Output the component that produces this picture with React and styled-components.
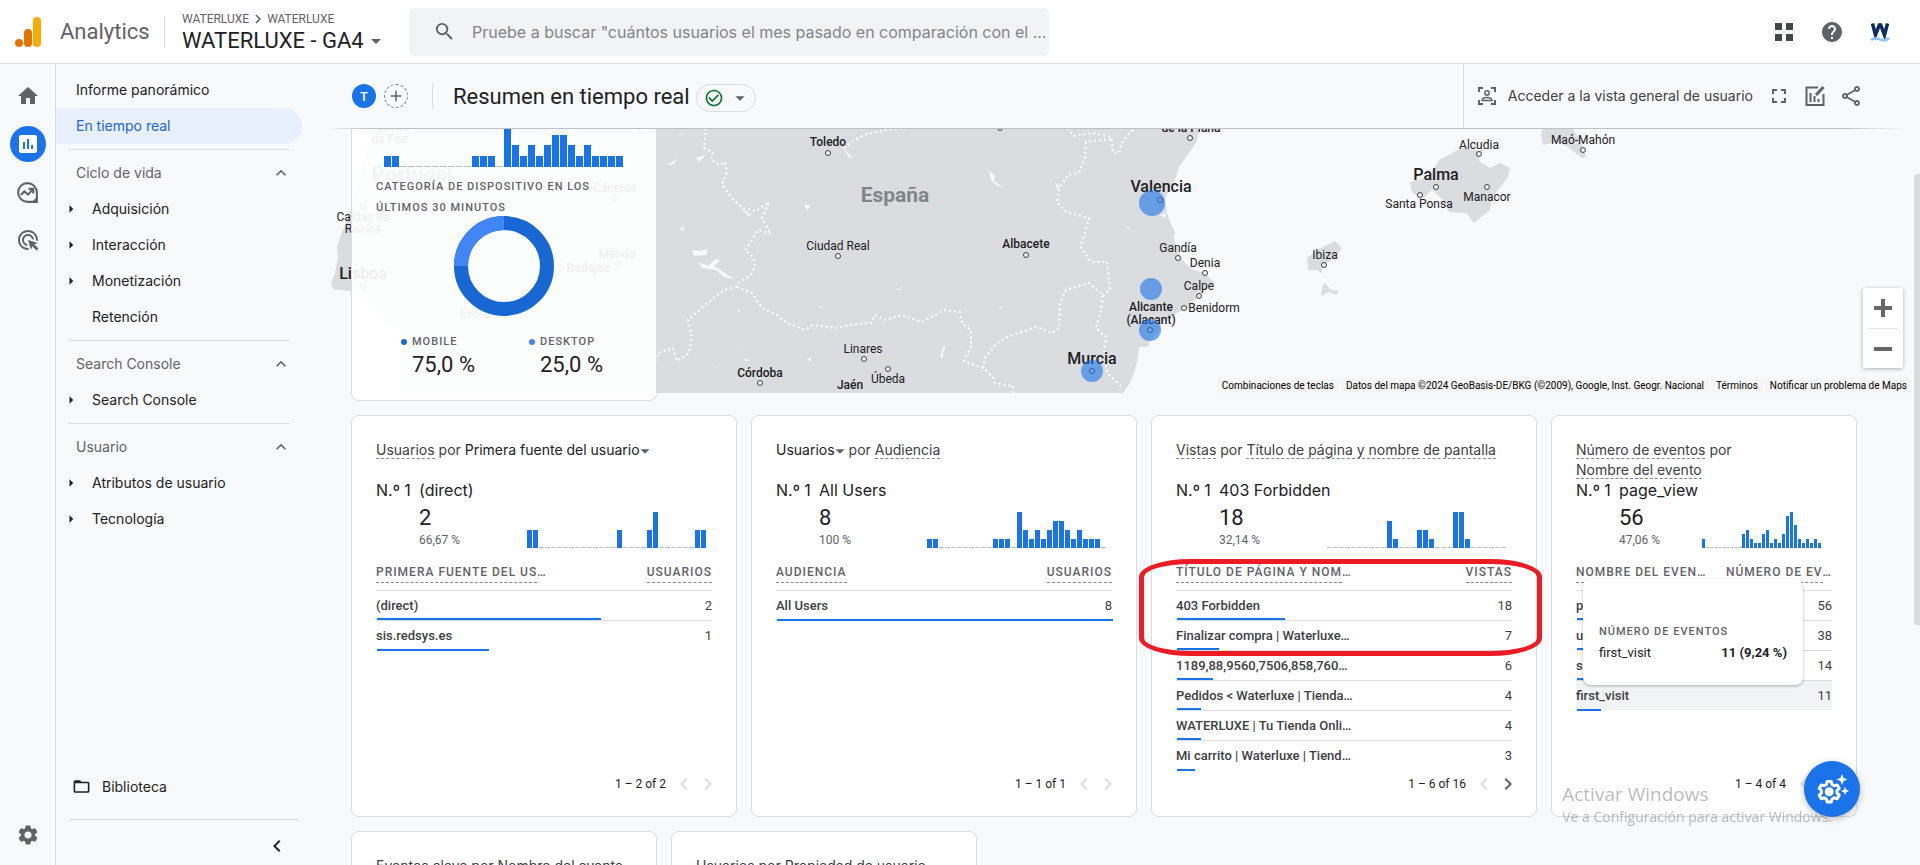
import React from "react";
import styled, { createGlobalStyle } from "styled-components";
import {
  MdAdd,
  MdAdsClick,
  MdArrowDropDown,
  MdArrowRight,
  MdCheckCircleOutline,
  MdChevronLeft,
  MdChevronRight,
  MdExpandLess,
  MdFolderOpen,
  MdFullscreen,
  MdHelp,
  MdHome,
  MdInsertChart,
  MdOutlineShare,
  MdSearch,
  MdSettings,
} from "react-icons/md";

const GlobalStyle = createGlobalStyle`
  * {
    box-sizing: border-box;
  }
  body {
    margin: 0;
    overflow: hidden;
    background: #f8f9fb;
    color: #202124;
    font-family: Roboto, "Liberation Sans", sans-serif;
  }
  button {
    padding: 0;
    border: 0;
    background: none;
    color: inherit;
    font: inherit;
    cursor: pointer;
  }
  a {
    color: inherit;
    text-decoration: none;
  }
  svg {
    display: block;
    flex-shrink: 0;
  }
`;

const displayFont = 'Inter, Roboto, "Liberation Sans", sans-serif';

const Page = styled.div`
  display: flex;
  flex-direction: column;
  height: 100vh;
`;

/* top bar */

const Header = styled.header`
  display: flex;
  align-items: center;
  height: 64px;
  flex-shrink: 0;
  padding: 0 28px 0 14px;
  border-bottom: 1px solid #dadce0;
  background: #fff;
`;

const Product = styled.div`
  display: flex;
  align-items: center;
  gap: 18px;
  width: 150px;
  color: #5f6368;
  font-size: 22px;
`;

const Account = styled.div`
  display: flex;
  flex-direction: column;
  justify-content: center;
  width: 245px;
  height: 32px;
  padding-left: 17px;
  border-left: 1px solid #dadce0;
`;

const Crumbs = styled.div`
  display: flex;
  align-items: center;
  color: #5f6368;
  font-size: 12px;
  line-height: 16px;
`;

const Property = styled.button`
  display: flex;
  align-items: center;
  font-size: 22px;
  line-height: 26px;

  svg {
    color: #5f6368;
  }
`;

const Search = styled.label`
  display: flex;
  align-items: center;
  gap: 16px;
  width: 640px;
  height: 48px;
  padding: 0 4px 0 24px;
  border-radius: 6px;
  background: #f1f3f4;
  color: #5f6368;
`;

const SearchInput = styled.input`
  flex: 1;
  min-width: 0;
  padding: 0;
  border: 0;
  outline: 0;
  background: none;
  font-family: ${displayFont};
  font-size: 16px;
  line-height: 20px;

  &::placeholder {
    color: #80868b;
  }
`;

const HeaderTools = styled.div`
  display: flex;
  gap: 24px;
  margin-left: auto;
  color: #5f6368;
`;

/* navigation */

const Body = styled.div`
  display: flex;
  flex: 1;
  min-height: 0;
`;

const Rail = styled.nav`
  display: flex;
  flex-direction: column;
  align-items: center;
  gap: 12px;
  width: 56px;
  flex-shrink: 0;
  padding: 14px 0 12px;
  border-right: 1px solid #dadce0;
  color: #5f6368;
`;

const RailButton = styled.button`
  display: grid;
  place-items: center;
  width: 36px;
  height: 36px;
  border-radius: 50%;
  background: ${(props) => (props.$active ? "#1a73e8" : "none")};
  color: ${(props) => (props.$active ? "#fff" : "inherit")};

  &:last-child {
    margin-top: auto;
  }
`;

const SideNav = styled.nav`
  display: flex;
  flex-direction: column;
  width: 246px;
  flex-shrink: 0;
  padding-top: 8px;
  font-family: ${displayFont};
  font-size: 14px;
  line-height: 18px;
`;

const NavLink = styled.a`
  display: flex;
  align-items: center;
  height: 36px;
  padding-left: 20px;
  border-radius: 0 18px 18px 0;
  background: ${(props) => (props.$active ? "#e8f0fe" : "none")};
  color: ${(props) => (props.$active ? "#1967d2" : "#202124")};
`;

const NavRule = styled.hr`
  width: 222px;
  height: 1px;
  margin: 5px 12px;
  border: 0;
  background: #dadce0;
`;

const NavHeading = styled.button`
  display: flex;
  align-items: center;
  justify-content: space-between;
  height: 36px;
  padding: 0 11px 0 20px;
  color: #5f6368;
`;

const NavItem = styled.a`
  display: flex;
  align-items: center;
  height: 36px;
  padding-left: 6px;
`;

const ArrowSlot = styled.span`
  width: 30px;
`;

const Library = styled.a`
  display: flex;
  align-items: center;
  gap: 11px;
  margin-top: auto;
  padding: 0 0 23px 16px;
`;

const NavFooter = styled.div`
  display: flex;
  justify-content: flex-end;
  margin: 0 3px 0 13px;
  padding: 14px 10px 7px 0;
  border-top: 1px solid #dadce0;
`;

/* report */

const Main = styled.main`
  position: relative;
  display: flex;
  flex-direction: column;
  flex: 1;
  min-width: 0;
`;

const TitleBar = styled.div`
  display: flex;
  height: 65px;
  flex-shrink: 0;
  margin-left: 24px;
  padding-left: 26px;
  border-bottom: 1px solid;
  border-image: linear-gradient(
      to right,
      transparent,
      #bdc1c6 40px,
      #bdc1c6 calc(100% - 80px),
      transparent calc(100% - 12px)
    )
    1;
`;

const TitleGroup = styled.div`
  display: flex;
  align-items: center;
  flex: 1;
`;

const Avatar = styled.button`
  display: grid;
  place-items: center;
  width: 24px;
  height: 24px;
  margin-right: 8px;
  border: ${(props) => (props.$add ? "1px dashed #80868b" : "0")};
  border-radius: 50%;
  background: ${(props) => (props.$add ? "none" : "#1a73e8")};
  color: ${(props) => (props.$add ? "#5f6368" : "#fff")};
  font-size: 13px;
  font-weight: 500;
`;

const Title = styled.h1`
  margin: 0 6px 0 16px;
  padding: 2px 0 0 20px;
  border-left: 1px solid #dadce0;
  font-size: 22px;
  font-weight: 400;
  line-height: 24px;
`;

const StatusButton = styled.button`
  display: flex;
  align-items: center;
  justify-content: space-between;
  width: 60px;
  height: 28px;
  margin-top: 4px;
  padding: 0 4px 0 7px;
  border: 1px solid #dadce0;
  border-radius: 14px;
  color: #5f6368;
`;

const Actions = styled.div`
  display: flex;
  align-items: center;
  gap: 12px;
  padding: 0 57px 0 11px;
  border-left: 1px solid #dadce0;
  color: #5f6368;
`;

const Overview = styled.button`
  display: flex;
  align-items: center;
  gap: 9px;
  margin-right: 2px;
  color: #3c4043;
  font-family: ${displayFont};
  font-size: 14px;
  line-height: 18px;
`;

const Scroller = styled.div`
  flex: 1;
  min-height: 0;
  overflow: hidden;
`;

const ScrollThumb = styled.div`
  position: absolute;
  top: 110px;
  right: 0;
  width: 6px;
  height: 451px;
  border-radius: 3px 0 0 3px;
  background: #dadce0;
`;

const MapSection = styled.section`
  display: grid;
  margin-left: 28px;
  margin-right: 6px;

  > * {
    grid-area: 1 / 1;
  }
`;

const MapFrame = styled.div`
  position: relative;
  height: 264px;
  overflow: hidden;

  > svg {
    width: 100%;
    height: 100%;
  }
`;

const ZoomControl = styled.div`
  position: absolute;
  right: 11px;
  top: 159px;
  width: 40px;
  padding: 0 5px;
  border-radius: 2px;
  background: #fff;
  box-shadow: 0 1px 4px rgba(0, 0, 0, 0.3);
  color: #666;
`;

const ZoomButton = styled.button`
  display: grid;
  place-items: center;
  width: 30px;
  height: 40px;

  & + & {
    border-top: 1px solid #e6e6e6;
  }
`;

const Attribution = styled.div`
  position: absolute;
  right: 2px;
  bottom: 0;
  display: flex;
  gap: 2px;
  font-size: 10px;
  line-height: 14px;
  color: #000;

  > * {
    padding: 0 5px;
    background: #f5f5f5;
  }
`;

const RealtimeCard = styled.section`
  position: relative;
  width: 306px;
  height: 272px;
  margin-left: 21px;
  padding: 0 24px;
  overflow: hidden;
  border: 1px solid #dadce0;
  border-top: 0;
  border-radius: 0 0 8px 8px;
  background: rgba(255, 255, 255, 0.92);

  > svg {
    margin: 0 auto;
  }
  > svg:first-child {
    margin-left: 8px;
  }
`;

const CardCaption = styled.h2`
  height: 49px;
  margin: 0;
  padding-top: 9px;
  color: #5f6368;
  font-size: 11px;
  font-weight: 500;
  letter-spacing: 1px;
  line-height: 21px;
`;

const Legend = styled.dl`
  display: flex;
  gap: 24px;
  margin: 18px 0 0 24px;
`;

const LegendItem = styled.div`
  width: 104px;
  padding-left: 12px;
`;

const LegendName = styled.dt`
  display: flex;
  align-items: center;
  gap: 5px;
  margin-left: -11px;
  color: #5f6368;
  font-size: 11px;
  font-weight: 500;
  letter-spacing: 1px;
  line-height: 16px;

  &::before {
    content: "";
    width: 6px;
    height: 6px;
    border-radius: 50%;
    background: ${(props) => props.$color};
  }
`;

const LegendValue = styled.dd`
  margin: 0;
  font-size: 22px;
  line-height: 30px;
`;

const Cards = styled.div`
  display: grid;
  grid-template-columns: repeat(19, 1fr);
  gap: 14px;
  margin: 14px 63px 0 49px;
`;

const Card = styled.section`
  position: relative;
  display: flex;
  flex-direction: column;
  grid-column: span ${(props) => props.$span};
  height: 402px;
  padding: 24px;
  border: 1px solid #dadce0;
  border-radius: 8px;
  background: #fff;
`;

const CardTitle = styled.h2`
  height: 40px;
  margin: 0;
  color: #3c4043;
  font-family: ${displayFont};
  font-size: 14px;
  font-weight: 400;
  line-height: 20px;
  white-space: nowrap;
`;

const Hint = styled.span`
  border-bottom: 1px dashed #80868b;
`;

const Picker = styled.button`
  color: #202124;

  svg {
    display: inline-block;
    margin: -2px -6px;
    color: #5f6368;
    vertical-align: middle;
  }
`;

const Top = styled.div`
  display: grid;
  grid-template-columns: 43px 1fr auto;
  height: 68px;
  font-family: ${displayFont};
  font-size: 16px;
  line-height: 20px;
  white-space: nowrap;
`;

const TopName = styled.div`
  grid-column: span 2;
`;

const TopStats = styled.div`
  grid-column: 2;
  padding-top: 4px;
  font-family: Roboto, sans-serif;
`;

const TopValue = styled.div`
  font-size: 22px;
  line-height: 28px;
`;

const TopShare = styled.div`
  color: #5f6368;
  font-size: 12px;
  line-height: 16px;
`;

const ChartSlot = styled.div`
  align-self: end;
  padding-right: ${(props) => (props.$narrow ? 10 : 5)}px;
`;

const Table = styled.table`
  width: 100%;
  margin-top: 14px;
  border-collapse: collapse;
`;

const Th = styled.th`
  height: 28px;
  padding: 0;
  border-bottom: 1px solid #dadce0;
  color: #5f6368;
  font-size: 12px;
  font-weight: 500;
  letter-spacing: 1px;
  line-height: 20px;
  text-align: ${(props) => (props.$end ? "right" : "left")};
  vertical-align: top;
  white-space: nowrap;

  ${Hint} {
    display: inline-block;
    line-height: 20px;
  }
`;

const Row = styled.tr`
  position: relative;
  height: 30px;
  border-bottom: 1px solid #dadce0;
  background: ${(props) => (props.$hover ? "#f1f3f4" : "none")};
  color: #3c4043;
  font-size: 13px;

  &:last-child {
    border-bottom: 0;
  }
`;

const Name = styled.td`
  padding: 0;
  font-weight: 500;
  white-space: nowrap;
`;

const Amount = styled.td`
  padding: 0;
  text-align: right;
`;

const Share = styled.span`
  position: absolute;
  bottom: -1px;
  left: 1px;
  height: 2px;
  background: #1a73e8;
`;

const Pager = styled.div`
  display: flex;
  align-items: center;
  justify-content: flex-end;
  margin: auto -8px -4px 0;
  font-size: 12px;
  line-height: 24px;
`;

const PagerButton = styled.button`
  display: grid;
  place-items: center;
  width: 24px;
  height: 24px;
  color: ${(props) => (props.disabled ? "#dadce0" : "#5f6368")};

  &:first-of-type {
    margin-left: 6px;
  }
`;

/* things that float over the report */

const RedMark = styled.div`
  position: absolute;
  z-index: 2;
  top: 143px;
  left: -13px;
  right: -6px;
  height: 97px;
  border: 5px solid #ed1c24;
  border-radius: 52px / 18px;
  pointer-events: none;
`;

const Tooltip = styled.div`
  position: absolute;
  top: 163px;
  left: 31px;
  width: 220px;
  height: 106px;
  padding: 45px 16px 0;
  border-radius: 8px;
  background: #fff;
  box-shadow: 0 1px 3px rgba(60, 64, 67, 0.4);
`;

const TooltipTitle = styled.div`
  color: #5f6368;
  font-size: 11px;
  font-weight: 500;
  letter-spacing: 1px;
  line-height: 16px;
`;

const TooltipRow = styled.div`
  display: flex;
  justify-content: space-between;
  font-size: 13px;
  line-height: 26px;
`;

const Fab = styled.button`
  position: fixed;
  right: 60px;
  bottom: 48px;
  display: grid;
  place-items: center;
  width: 56px;
  height: 56px;
  border-radius: 50%;
  background: #1a73e8;
  box-shadow: 0 2px 6px rgba(60, 64, 67, 0.35);
`;

const Watermark = styled.div`
  position: fixed;
  right: 88px;
  bottom: 38px;
  color: rgba(120, 120, 120, 0.5);
  font-family: "Open Sans", sans-serif;
  font-size: 14px;
  line-height: 20px;
  pointer-events: none;
`;

const WatermarkTitle = styled.div`
  font-size: 19px;
  line-height: 26px;
`;

const AnalyticsLogo = () => (
  <svg width="28" height="32" viewBox="0 0 28 32">
    <rect x="19" y="1" width="8" height="30" rx="4" fill="#f9ab00" />
    <path d="M10 17a4 4 0 0 1 8 0v10a4 4 0 0 1-8 0z" fill="#e37400" />
    <circle cx="5" cy="27" r="4" fill="#e37400" />
  </svg>
);

const AppsIcon = () => (
  <svg width="24" height="24" viewBox="0 0 24 24" fill="#444746">
    <path d="M3 3h7v7H3zM14 3h7v7h-7zM3 14h7v7H3zM14 14h7v7h-7z" />
  </svg>
);

const BrandIcon = () => (
  <svg width="24" height="24" viewBox="0 0 24 24">
    <path
      d="M4.500 3.500l3 11.500L11.300 5h1.400l3.800 10 3-11.500"
      fill="none"
      stroke="#0b2c5f"
      strokeWidth="3.500"
    />
    <path
      d="M3 20q4-3 9-.5t9-1.500"
      fill="none"
      stroke="#8cc4ff"
      strokeWidth="2.500"
    />
  </svg>
);

const TrendIcon = () => (
  <svg width="25" height="25" viewBox="0 0 24 24" fill="none" stroke="currentColor" strokeWidth="2">
    <path d="M12 3a9 9 0 1 0 0 18h9v-9a9 9 0 0 0-9-9z" />
    <path d="M18 20.500a10 10 0 0 0 2.500-2.500" />
    <path d="M5.500 14.500L9 11l3.500 3 4.500-5" />
    <path d="M13 8.500h4.500V13" />
  </svg>
);

const UserScanIcon = () => (
  <svg width="24" height="24" viewBox="0 0 24 24" fill="none" stroke="#5f6368" strokeWidth="2">
    <path d="M4 8V4h4M16 4h4v4M20 16v4h-4M8 20H4v-4" />
    <circle cx="12" cy="9" r="2.200" strokeWidth="1.500" />
    <path d="M7 16.500c0-4 10-4 10 0z" strokeWidth="1.500" />
  </svg>
);

const EditChartIcon = () => (
  <svg width="24" height="24" viewBox="0 0 24 24" fill="none" stroke="currentColor" strokeWidth="2">
    <path d="M15 3.500H3.500V21H20.500V10" />
    <path d="M7.500 9v9M11.500 12v6M15.500 15v3" />
    <path d="M13 11l7.500-8" strokeWidth="3" />
  </svg>
);

const PlusIcon = () => (
  <svg width="18" height="18" fill="currentColor">
    <path d="M7 0h4v7h7v4h-7v7H7v-7H0V7h7z" />
  </svg>
);

const MinusIcon = () => (
  <svg width="18" height="18" fill="currentColor">
    <path d="M0 7h18v4H0z" />
  </svg>
);

const GearSparkIcon = () => (
  <svg width="36" height="36" viewBox="0 0 36 36" fill="none">
    <path
      d="M13.200 10.500h4l.8 3 2.200 1.300 3-.9 2 3.500-2.200 2.100v2.600l2.200 2.100-2 3.500-3-.9-2.200 1.300-.8 3h-4l-.8-3-2.200-1.300-3 .9-2-3.500 2.200-2.100v-2.600l-2.200-2.100 2-3.500 3 .9 2.200-1.300z"
      stroke="#fff"
      strokeWidth="3"
      strokeLinejoin="round"
    />
    <circle cx="15.200" cy="20.800" r="4.500" fill="#fff" />
    <path
      d="M28 3l1.600 3.900L33.500 8.500l-3.900 1.600L28 14l-1.600-3.900-3.900-1.600 3.900-1.600zM31 16l1.200 2.800L35 20l-2.800 1.200L31 24l-1.200-2.800L27 20l2.800-1.200z"
      fill="#fff"
    />
  </svg>
);

const Sparkbars = ({ values, max, pitch, scale, height }) => (
  <svg width={values.length * pitch} height={height}>
    {values.map((value, i) => {
      const h = value ? Math.round((value / max) * (scale || height)) : 1;
      return (
        <rect
          key={i}
          x={i * pitch}
          y={height - h}
          width={pitch - 1}
          height={h}
          fill={value ? "#1a73e8" : "#bdc1c6"}
        />
      );
    })}
  </svg>
);

const Donut = () => (
  <svg width="100" height="100" viewBox="0 0 100 100" fill="none" strokeWidth="14">
    <circle cx="50" cy="50" r="43" stroke="#1967d2" />
    <path d="M7 50A43 43 0 0 1 50 7" stroke="#4285f4" />
  </svg>
);

const regionBorders = [
  "M706 128L704 148 713 152 711 160 720 165 725 162 727 172 722 184 731 197 742 208 756 211 769 202 762 218 771 234 758 230 752 240 745 250 753 257 755 266 751 275 738 283 737 287",
  "M737 287L724 290 705 305 688 320 692 337 689 353 677 361 673 348 658 353 656 362",
  "M737 287L752 293 762 308 777 315 787 323 805 330 813 325 836 328 856 324 871 323 875 315 885 320 901 315 922 322 944 310 960 312 962 323 971 330 971 347 964 361 983 368 993 377 995 383 1013 386 1013 393",
  "M983 368L985 358 997 343 1007 337 1036 327 1052 333 1059 328 1060 303 1066 290 1089 283 1103 295 1101 310 1096 328 1106 337 1104 353 1107 373 1123 388",
  "M1068 128L1073 136 1093 133 1111 137 1113 152 1119 153 1121 145 1130 132 1136 128",
  "M1111 139L1086 142 1085 157 1079 173 1068 175 1060 187 1057 202 1066 212 1089 218 1081 247 1091 262 1107 262 1110 290 1103 295",
  "M844 148L852 142 864 135 885 130 911 128",
];

const lakes =
  "M666 165l12-6-5 5zM678 136l9-5-5 4zM696 158l10-3-7 7zM692 250l8 1 8-2-2 6-12 1zM698 262l10 4 8-7 4 1-6 6 20 13-10-2-8-7-14-2zM740 208l12 7-3 1zM804 205l7 0-4 5zM680 230l4-5-1 6zM989 170l6 6-1 5 10 7-8-3-5-5zM1055 182l4 4-1 6zM1124 224l8 6-3-1zM1160 215l6-2-1 5zM896 290l7-4-4 4zM735 345l10 14 7 1-6 1zM807 360l4-3 0 4zM940 357l3-10 3-1-3 6 0 6zM844 148l9 11-5-3zM714 365l3 3-1-2zM738 308l2 4-2 0zM818 305l6 3-3 0zM877 357l5-14-1 8zM998 306l6 1-3 1z";

// [name, x, y, size, weight, marker x, marker y]
const places = [
  ["Toledo", 828, 146, 12, 500, 828, 153],
  ["Ciudad Real", 838, 250, 12, 400, 838, 256],
  ["Albacete", 1026, 248, 12, 500, 1026, 255],
  ["de la Plana", 1191, 132, 12, 500, 1190, 138],
  ["Valencia", 1161, 192, 16, 500, 1160, 200],
  ["Gandía", 1178, 252, 12, 400, 1178, 258],
  ["Denia", 1205, 267, 12, 400, 1205, 273],
  ["Calpe", 1199, 290, 12, 400, 1199, 296],
  ["Benidorm", 1214, 312, 12, 400, 1184, 308],
  ["Alicante", 1151, 311, 12, 500],
  ["(Alacant)", 1151, 324, 12, 500, 1150, 330],
  ["Murcia", 1092, 364, 16, 500, 1092, 371],
  ["Linares", 863, 353, 12, 400, 864, 359],
  ["Úbeda", 888, 383, 12, 400, 888, 369],
  ["Córdoba", 760, 377, 12, 500, 760, 383],
  ["Jaén", 850, 389, 12, 500, 1000, 128],
  ["Alcudia", 1479, 149, 12, 400, 1479, 154],
  ["Palma", 1436, 180, 16, 500, 1436, 187],
  ["Santa Ponsa", 1419, 208, 12, 400, 1420, 195],
  ["Manacor", 1487, 201, 12, 400, 1487, 187],
  ["Maó-Mahón", 1583, 144, 12, 400, 1583, 150],
  ["Ibiza", 1325, 259, 12, 400, 1324, 265],
  ["Figueira", 388, 131, 12, 400],
  ["da Foz", 389, 143, 12, 400, 641, 131],
  ["Cáceres", 615, 192, 12, 400, 615, 198],
  ["Caldas da", 363, 221, 12, 400, 363, 207],
  ["Rainha", 363, 233, 12, 400],
  ["Mérida", 617, 258, 12, 400, 618, 264],
  ["Badajoz", 588, 272, 12, 500, 561, 268],
  ["Lisboa", 363, 279, 16, 500, 363, 287],
  ["Évora", 475, 318, 12, 400],
];

const MapDrawing = () => (
  <svg viewBox="330 129 1584 264" preserveAspectRatio="xMinYMin slice">
    <g fill="#dadce0">
      <path d="M1200 128L1196 143 1179 167 1175 180 1170 187 1165 200 1167 213 1170 222 1175 232 1174 238 1178 252 1185 263 1193 270 1205 273 1215 283 1205 290 1197 298 1191 302 1189 308 1179 312 1171 317 1162 322 1160 330 1150 340 1148 347 1139 347 1138 357 1135 370 1130 383 1123 393H400L400 330 372 312 360 290 348 291 333 289 331 283 335 273 338 257 337 247 341 235 352 207 372 128z" />
      <path d="M1462 148L1439 160 1429 177 1410 182 1412 192 1421 200 1432 190 1443 200 1449 212 1466 213 1474 223 1480 218 1490 210 1492 197 1502 185 1508 177 1510 168 1500 163 1490 168 1480 162 1478 155 1486 148 1479 151z" />
      <path d="M1541 135L1543 128 1572 128 1580 140 1586 157 1582 158 1568 147 1557 142 1543 145z" />
      <path d="M1317 250L1335 241 1342 248 1335 258 1329 262 1323 265 1322 273 1317 270 1308 270 1307 258z" />
      <path d="M1325 283L1331 290 1338 291 1337 295 1329 292 1321 296 1322 287z" />
    </g>
    <path d={lakes} fill="#f8f9fb" />
    <g fill="none" stroke="#fff" strokeWidth="2" strokeDasharray="2 3">
      {regionBorders.map((d) => (
        <path key={d} d={d} />
      ))}
    </g>
    <g fill="#202124" textAnchor="middle">
      {places.map(([name, x, y, size, weight]) => (
        <text key={name} x={x} y={y} fontSize={size} fontWeight={weight}>
          {name}
        </text>
      ))}
    </g>
    <g fill="#80868b" fontSize="21" fontWeight="700" textAnchor="middle">
      <text x="895" y="202">España</text>
      <text x="412" y="181">Portugal</text>
    </g>
    <g fill="#f1f3f4" stroke="#3c4043">
      {places
        .filter((place) => place[5])
        .map(([name, , , , , cx, cy]) => (
          <circle key={name} cx={cx} cy={cy} r="2.500" />
        ))}
    </g>
    <g fill="#1a73e8" fillOpacity=".6">
      <circle cx="1152" cy="203" r="13" />
      <circle cx="1151" cy="289" r="11" />
      <circle cx="1150" cy="330" r="11" />
      <circle cx="1092" cy="371" r="11" />
    </g>
  </svg>
);

const zeros = (n) => Array(n).fill(0);

const activity = [1, 1, ...zeros(9), 1, 1, 1, 0, 4, 2, 1, 2, 1, 2, 3, 3, 2, 1, 2, 1, 1, 1];

const cards = [
  {
    id: "source",
    span: 5,
    title: (
      <>
        <Hint>Usuarios</Hint> por{" "}
        <Picker>
          Primera fuente del usuario
          <MdArrowDropDown size={22} />
        </Picker>
      </>
    ),
    name: "(direct)",
    value: "2",
    share: "66,67 %",
    max: 2,
    bars: [1, 1, ...zeros(13), 1, ...zeros(4), 1, 2, ...zeros(6), 1, 1],
    columns: [["PRIMERA FUENTE DEL US", "…"], ["USUARIOS"]],
    total: 3,
    rows: [
      ["(direct)", 2],
      ["sis.redsys.es", 1],
    ],
    range: "1 – 2 of 2",
  },
  {
    id: "audience",
    span: 5,
    title: (
      <>
        <Picker>
          Usuarios
          <MdArrowDropDown size={22} />
        </Picker>{" "}
        por <Hint>Audiencia</Hint>
      </>
    ),
    name: "All Users",
    value: "8",
    share: "100 %",
    max: 4,
    bars: [...activity, 0],
    columns: [["AUDIENCIA"], ["USUARIOS"]],
    total: 8,
    rows: [["All Users", 8]],
    range: "1 – 1 of 1",
  },
  {
    id: "page",
    span: 5,
    title: (
      <>
        <Hint>Vistas</Hint> por <Hint>Título de página y nombre de pantalla</Hint>
      </>
    ),
    name: "403 Forbidden",
    value: "18",
    share: "32,14 %",
    max: 4,
    bars: [...zeros(10), 3, 1, ...zeros(3), 2, 2, 1, ...zeros(3), 4, 4, 1, ...zeros(6)],
    columns: [["TÍTULO DE PÁGINA Y NOM", "…"], ["VISTAS"]],
    total: 56,
    rows: [
      ["403 Forbidden", 18],
      ["Finalizar compra | Waterluxe…", 7],
      ["1189,88,9560,7506,858,760…", 6],
      ["Pedidos < Waterluxe | Tienda…", 4],
      ["WATERLUXE | Tu Tienda Onli…", 4],
      ["Mi carrito | Waterluxe | Tiend…", 3],
    ],
    range: "1 – 6 of 16",
    hasNext: true,
    overlay: <RedMark />,
  },
  {
    id: "event",
    span: 4,
    title: (
      <>
        <Hint>Número de eventos</Hint> por
        <br />
        <Hint>Nombre del evento</Hint>
      </>
    ),
    name: "page_view",
    value: "56",
    share: "47,06 %",
    max: 8,
    bars: [2, ...zeros(9), 3, 4, 2, 1, 1, 3, 4, 1, 2, 1, 3, 7, 8, 5, 2, 1, 2, 1, 2, 1],
    columns: [["NOMBRE DEL EVEN", "…"], ["NÚMERO DE EV", "…"]],
    total: 119,
    rows: [
      ["page_view", 56],
      ["user_engagement", 38],
      ["session_start", 14],
      ["first_visit", 11],
    ],
    hovered: "first_visit",
    range: "1 – 4 of 4",
    overlay: (
      <Tooltip role="tooltip">
        <TooltipTitle>NÚMERO DE EVENTOS</TooltipTitle>
        <TooltipRow>
          <span>first_visit</span>
          <b>11 (9,24 %)</b>
        </TooltipRow>
      </Tooltip>
    ),
  },
];

const ReportCard = ({ card }) => (
  <Card $span={card.span}>
    <CardTitle>{card.title}</CardTitle>
    <Top>
      <div>N.º 1</div>
      <TopName>{card.name}</TopName>
      <TopStats>
        <TopValue>{card.value}</TopValue>
        <TopShare>{card.share}</TopShare>
      </TopStats>
      <ChartSlot $narrow={card.span < 5}>
        <Sparkbars
          values={card.bars}
          max={card.max}
          pitch={card.span < 5 ? 4 : 6}
          height={36}
        />
      </ChartSlot>
    </Top>
    <Table>
      <thead>
        <tr>
          {card.columns.map(([label, more], i) => (
            <Th key={label} scope="col" $end={i === 1}>
              <Hint>{label}</Hint>
              {more}
            </Th>
          ))}
        </tr>
      </thead>
      <tbody>
        {card.rows.map(([name, amount]) => (
          <Row key={name} $hover={name === card.hovered}>
            <Name>
              {name}
              <Share style={{ width: `${(amount / card.total) * 100}%` }} />
            </Name>
            <Amount>{amount}</Amount>
          </Row>
        ))}
      </tbody>
    </Table>
    <Pager>
      {card.range}
      <PagerButton aria-label="Anterior" disabled>
        <MdChevronLeft size={24} />
      </PagerButton>
      <PagerButton aria-label="Siguiente" disabled={!card.hasNext}>
        <MdChevronRight size={24} />
      </PagerButton>
    </Pager>
    {card.overlay}
  </Card>
);

const sections = [
  {
    name: "Ciclo de vida",
    items: ["Adquisición", "Interacción", "Monetización", "Retención"],
  },
  { name: "Search Console", items: ["Search Console"] },
  { name: "Usuario", items: ["Atributos de usuario", "Tecnología"] },
];

const App = () => {
  return (
    <Page>
      <GlobalStyle />
      <Header>
        <Product>
          <AnalyticsLogo />
          Analytics
        </Product>
        <Account>
          <Crumbs>
            WATERLUXE
            <MdChevronRight size={18} />
            WATERLUXE
          </Crumbs>
          <Property>
            WATERLUXE - GA4
            <MdArrowDropDown size={24} />
          </Property>
        </Account>
        <Search>
          <MdSearch size={23} />
          <SearchInput
            type="text"
            aria-label="Buscar"
            placeholder='Pruebe a buscar "cuántos usuarios el mes pasado en comparación con el ...'
          />
        </Search>
        <HeaderTools>
          <button aria-label="Aplicaciones">
            <AppsIcon />
          </button>
          <button aria-label="Ayuda">
            <MdHelp size={24} />
          </button>
          <button aria-label="Cuenta">
            <BrandIcon />
          </button>
        </HeaderTools>
      </Header>
      <Body>
        <Rail>
          <RailButton aria-label="Inicio">
            <MdHome size={24} />
          </RailButton>
          <RailButton aria-label="Informes" $active>
            <MdInsertChart size={24} />
          </RailButton>
          <RailButton aria-label="Explorar">
            <TrendIcon />
          </RailButton>
          <RailButton aria-label="Publicidad">
            <MdAdsClick size={24} />
          </RailButton>
          <RailButton aria-label="Administrar">
            <MdSettings size={24} />
          </RailButton>
        </Rail>
        <SideNav>
          <NavLink href="#">Informe panorámico</NavLink>
          <NavLink href="#" $active>
            En tiempo real
          </NavLink>
          {sections.map((section) => (
            <React.Fragment key={section.name}>
              <NavRule />
              <NavHeading>
                {section.name}
                <MdExpandLess size={20} />
              </NavHeading>
              {section.items.map((item) => (
                <NavItem key={item} href="#">
                  <ArrowSlot>
                    {item !== "Retención" && <MdArrowRight size={18} />}
                  </ArrowSlot>
                  {item}
                </NavItem>
              ))}
            </React.Fragment>
          ))}
          <Library href="#">
            <MdFolderOpen size={19} />
            Biblioteca
          </Library>
          <NavFooter>
            <button aria-label="Contraer">
              <MdChevronLeft size={24} />
            </button>
          </NavFooter>
        </SideNav>
        <Main>
          <TitleBar>
            <TitleGroup>
              <Avatar>T</Avatar>
              <Avatar $add aria-label="Añadir comparación">
                <MdAdd size={18} />
              </Avatar>
              <Title>Resumen en tiempo real</Title>
              <StatusButton aria-label="Estado de los datos">
                <MdCheckCircleOutline size={20} color="#137333" />
                <MdArrowDropDown size={22} />
              </StatusButton>
            </TitleGroup>
            <Actions>
              <Overview>
                <UserScanIcon />
                Acceder a la vista general de usuario
              </Overview>
              <button aria-label="Pantalla completa">
                <MdFullscreen size={24} />
              </button>
              <button aria-label="Personalizar informe">
                <EditChartIcon />
              </button>
              <button aria-label="Compartir">
                <MdOutlineShare size={24} />
              </button>
            </Actions>
          </TitleBar>
          <Scroller>
            <MapSection>
              <MapFrame>
                <MapDrawing />
                <ZoomControl>
                  <ZoomButton aria-label="Ampliar">
                    <PlusIcon />
                  </ZoomButton>
                  <ZoomButton aria-label="Reducir">
                    <MinusIcon />
                  </ZoomButton>
                </ZoomControl>
                <Attribution>
                  <button>Combinaciones de teclas</button>
                  <span>
                    Datos del mapa ©2024 GeoBasis-DE/BKG (©2009), Google, Inst. Geogr. Nacional
                  </span>
                  <a href="#">Términos</a>
                  <a href="#">Notificar un problema de Maps</a>
                </Attribution>
              </MapFrame>
              <RealtimeCard>
                <Sparkbars
                  values={[...activity, 1]}
                  max={4}
                  pitch={8}
                  scale={43}
                  height={38}
                />
                <CardCaption>
                  CATEGORÍA DE DISPOSITIVO EN LOS ÚLTIMOS 30 MINUTOS
                </CardCaption>
                <Donut />
                <Legend>
                  <LegendItem>
                    <LegendName $color="#1967d2">MOBILE</LegendName>
                    <LegendValue>75,0 %</LegendValue>
                  </LegendItem>
                  <LegendItem>
                    <LegendName $color="#4285f4">DESKTOP</LegendName>
                    <LegendValue>25,0 %</LegendValue>
                  </LegendItem>
                </Legend>
              </RealtimeCard>
            </MapSection>
            <Cards>
              {cards.map((card) => (
                <ReportCard key={card.id} card={card} />
              ))}
              <Card $span={4}>
                <CardTitle>Eventos clave por Nombre del evento</CardTitle>
              </Card>
              <Card $span={4}>
                <CardTitle>Usuarios por Propiedad de usuario</CardTitle>
              </Card>
            </Cards>
          </Scroller>
          <ScrollThumb />
        </Main>
      </Body>
      <Fab aria-label="Estadísticas">
        <GearSparkIcon />
      </Fab>
      <Watermark>
        <WatermarkTitle>Activar Windows</WatermarkTitle>
        Ve a Configuración para activar Windows.
      </Watermark>
    </Page>
  );
};

export default App;
